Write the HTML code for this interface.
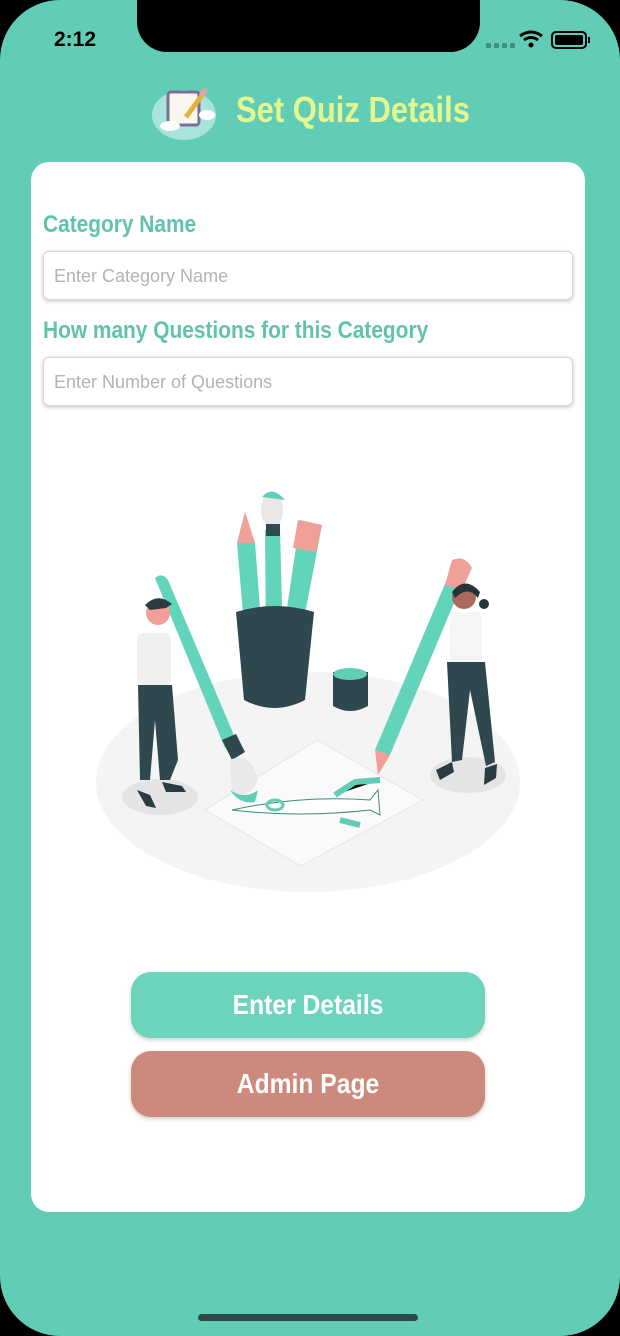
<!DOCTYPE html>
<html><head><meta charset="utf-8"><style>
*{margin:0;padding:0;box-sizing:border-box}
body{width:620px;height:1336px;background:#000;position:relative;overflow:hidden;font-family:"Liberation Sans",sans-serif}
.screen{position:absolute;left:0;top:0;width:620px;height:1336px;background:#62cdb7;border-radius:60px}
.notch{position:absolute;left:137px;top:0;width:343px;height:52px;background:#000;border-radius:0 0 30px 30px}
.time{position:absolute;left:54px;top:28px;font-size:21px;font-weight:bold;color:#000}
.cond{transform-origin:0 50%;white-space:nowrap}
.title{position:absolute;left:236px;top:89px;font-weight:bold;font-size:36px;color:#e3f78e;transform:scaleX(0.86)}
.card{position:absolute;left:31px;top:162px;width:554px;height:1050px;background:#fff;border-radius:18px}
.lbl{position:absolute;left:43px;font-weight:bold;font-size:24px;color:#62c3ac;transform:scaleX(0.87)}
.inp{position:absolute;left:43px;width:530px;height:49px;border:1px solid #d8d8d8;border-radius:6px;box-shadow:0 1px 4px rgba(0,0,0,.25);font-size:18px;color:#b3b3b3;padding:14px 10px;background:#fff}
.btn{position:absolute;left:131px;width:354px;height:66px;border-radius:20px;box-shadow:0 2px 5px rgba(0,0,0,.2)}
.btn span{display:block;color:#fff;font-weight:bold;font-size:28px;text-align:center;line-height:66px;transform:scaleX(0.88)}
.home{position:absolute;left:198px;top:1314px;width:220px;height:7px;border-radius:4px;background:#2f4a44}
</style></head><body>
<div class="screen"></div>
<div class="notch"></div>
<div class="time">2:12</div>
<svg style="position:absolute;left:0;top:0" width="620" height="160">
<g fill="#3f8f80"><rect x="486" y="43" width="5" height="5" rx="1"/><rect x="494" y="43" width="5" height="5" rx="1"/><rect x="502" y="43" width="5" height="5" rx="1"/><rect x="510" y="43" width="5" height="5" rx="1"/></g>
<path d="M520 36 Q531 28 542 36" stroke="#000" stroke-width="3" fill="none"/><path d="M524 40 Q531 35 538 40" stroke="#000" stroke-width="3" fill="none"/><circle cx="531" cy="45" r="2.5"/>
<rect x="552" y="32" width="34" height="16" rx="4" fill="none" stroke="#000" stroke-width="2"/><rect x="555" y="35" width="28" height="10" rx="2" fill="#000"/><rect x="588" y="37" width="2" height="6" fill="#000"/>
<ellipse cx="184" cy="115" rx="32" ry="25" fill="#a9e4dc"/>
<rect x="168" y="92" width="31" height="33" rx="3" fill="#f8f6ee" stroke="#7a6f96" stroke-width="3"/>
<path d="M186 117 L203 94" stroke="#e2b33c" stroke-width="5"/><path d="M201 96 L206 89" stroke="#e7a0a0" stroke-width="5"/>
<ellipse cx="170" cy="126" rx="10" ry="5" fill="#fff"/><ellipse cx="207" cy="115" rx="8" ry="5" fill="#fff"/>
</svg>
<div class="title cond">Set Quiz Details</div>
<div class="card"></div>
<div class="lbl cond" style="top:211px">Category Name</div>
<div class="inp" style="top:251px">Enter Category Name</div>
<div class="lbl cond" style="top:317px">How many Questions for this Category</div>
<div class="inp" style="top:357px">Enter Number of Questions</div>
<svg style="position:absolute;left:0;top:470px" width="620" height="440" viewBox="0 470 620 440">
<ellipse cx="308" cy="782" rx="212" ry="110" fill="#f4f4f4"/>
<ellipse cx="160" cy="797" rx="38" ry="18" fill="#e4e4e4"/><ellipse cx="468" cy="775" rx="38" ry="18" fill="#e4e4e4"/>
<path d="M205 810 L317 740 L423 800 L301 866 Z" fill="#fafafa" stroke="#e6e6e6"/>
<path d="M232 810 Q300 795 370 800 L378 790 L380 815 L370 810 Q300 818 232 810 Z" fill="#fff" stroke="#3a8a7a"/>
<ellipse cx="275" cy="805" rx="8" ry="5" fill="none" stroke="#62cdb7" stroke-width="3"/>
<path d="M335 795 L355 782 L380 780 M340 820 L360 825" stroke="#62cdb7" stroke-width="6"/>
<path d="M237 543 L245 512 L255 543 L262 635 L245 637 Z" fill="#62d4bb"/><path d="M237 543 L245 512 L255 543Z" fill="#f0a096"/>
<path d="M265 530 L280 530 L283 640 L266 640 Z" fill="#62d4bb"/><ellipse cx="272" cy="510" rx="11" ry="18" fill="#e8e8e8"/><path d="M262 497 Q272 485 285 500 Z" fill="#62cdb7"/><rect x="266" y="524" width="14" height="12" fill="#2f4a4f"/>
<path d="M300 520 L322 525 L300 640 L283 635 Z" fill="#62d4bb"/><path d="M298 520 L322 525 L316 552 L293 548 Z" fill="#f0a096"/>
<path d="M236 612 Q275 600 314 612 L305 700 Q274 716 244 700 Z" fill="#2f474e"/>
<path d="M333 672 L368 672 L368 706 Q350 716 333 706 Z" fill="#2f474e"/><ellipse cx="350" cy="674" rx="17" ry="6" fill="#62cdb7"/>
<path d="M155 578 Q162 572 168 580 L236 740 L225 748 Z" fill="#62d4bb"/><path d="M222 740 L236 734 L245 752 L232 760Z" fill="#2f474e"/>
<path d="M230 760 Q250 750 258 780 Q250 800 232 792 Z" fill="#e8e8e8"/><path d="M230 790 Q245 800 258 790 L255 802 Q240 805 230 790Z" fill="#62cdb7"/>
<rect x="137" y="633" width="34" height="52" rx="6" fill="#f0f0f0"/>
<path d="M138 685 L172 685 L178 760 L170 780 L160 780 L155 720 L150 780 L140 780 Z" fill="#2f474e"/>
<circle cx="158" cy="613" r="12" fill="#f0a096"/><path d="M145 605 Q158 592 172 604 L166 608 L150 610 Z" fill="#2b3b40"/>
<path d="M137 790 L150 795 L156 808 L146 806Z M162 782 L182 786 L186 792 L166 792Z" fill="#2b3b40"/>
<path d="M455 560 Q462 555 470 565 L390 755 L375 750 Z" fill="#62d4bb"/><path d="M452 560 Q465 555 472 568 L462 590 L445 585 Z" fill="#f0a096"/>
<path d="M375 750 L390 755 L378 775 Z" fill="#f0a096"/>
<rect x="450" y="612" width="32" height="54" rx="6" fill="#f5f5f5"/>
<path d="M447 662 L485 662 L495 762 L486 766 L470 690 L462 760 L452 762 Z" fill="#2f474e"/>
<circle cx="464" cy="597" r="12" fill="#a86a5a"/><path d="M452 592 Q465 575 480 592 L478 598 Q468 585 455 598Z" fill="#243438"/><circle cx="484" cy="604" r="5" fill="#243438"/>
<path d="M436 770 L452 762 L454 772 L440 780Z M485 768 L497 764 L496 778 L484 785Z" fill="#2b3b40"/>
</svg>
<div class="btn" style="top:972px;background:#6cd3bd"><span>Enter Details</span></div>
<div class="btn" style="top:1051px;background:#cd8a7c"><span>Admin Page</span></div>
<div class="home"></div>
</body></html>
